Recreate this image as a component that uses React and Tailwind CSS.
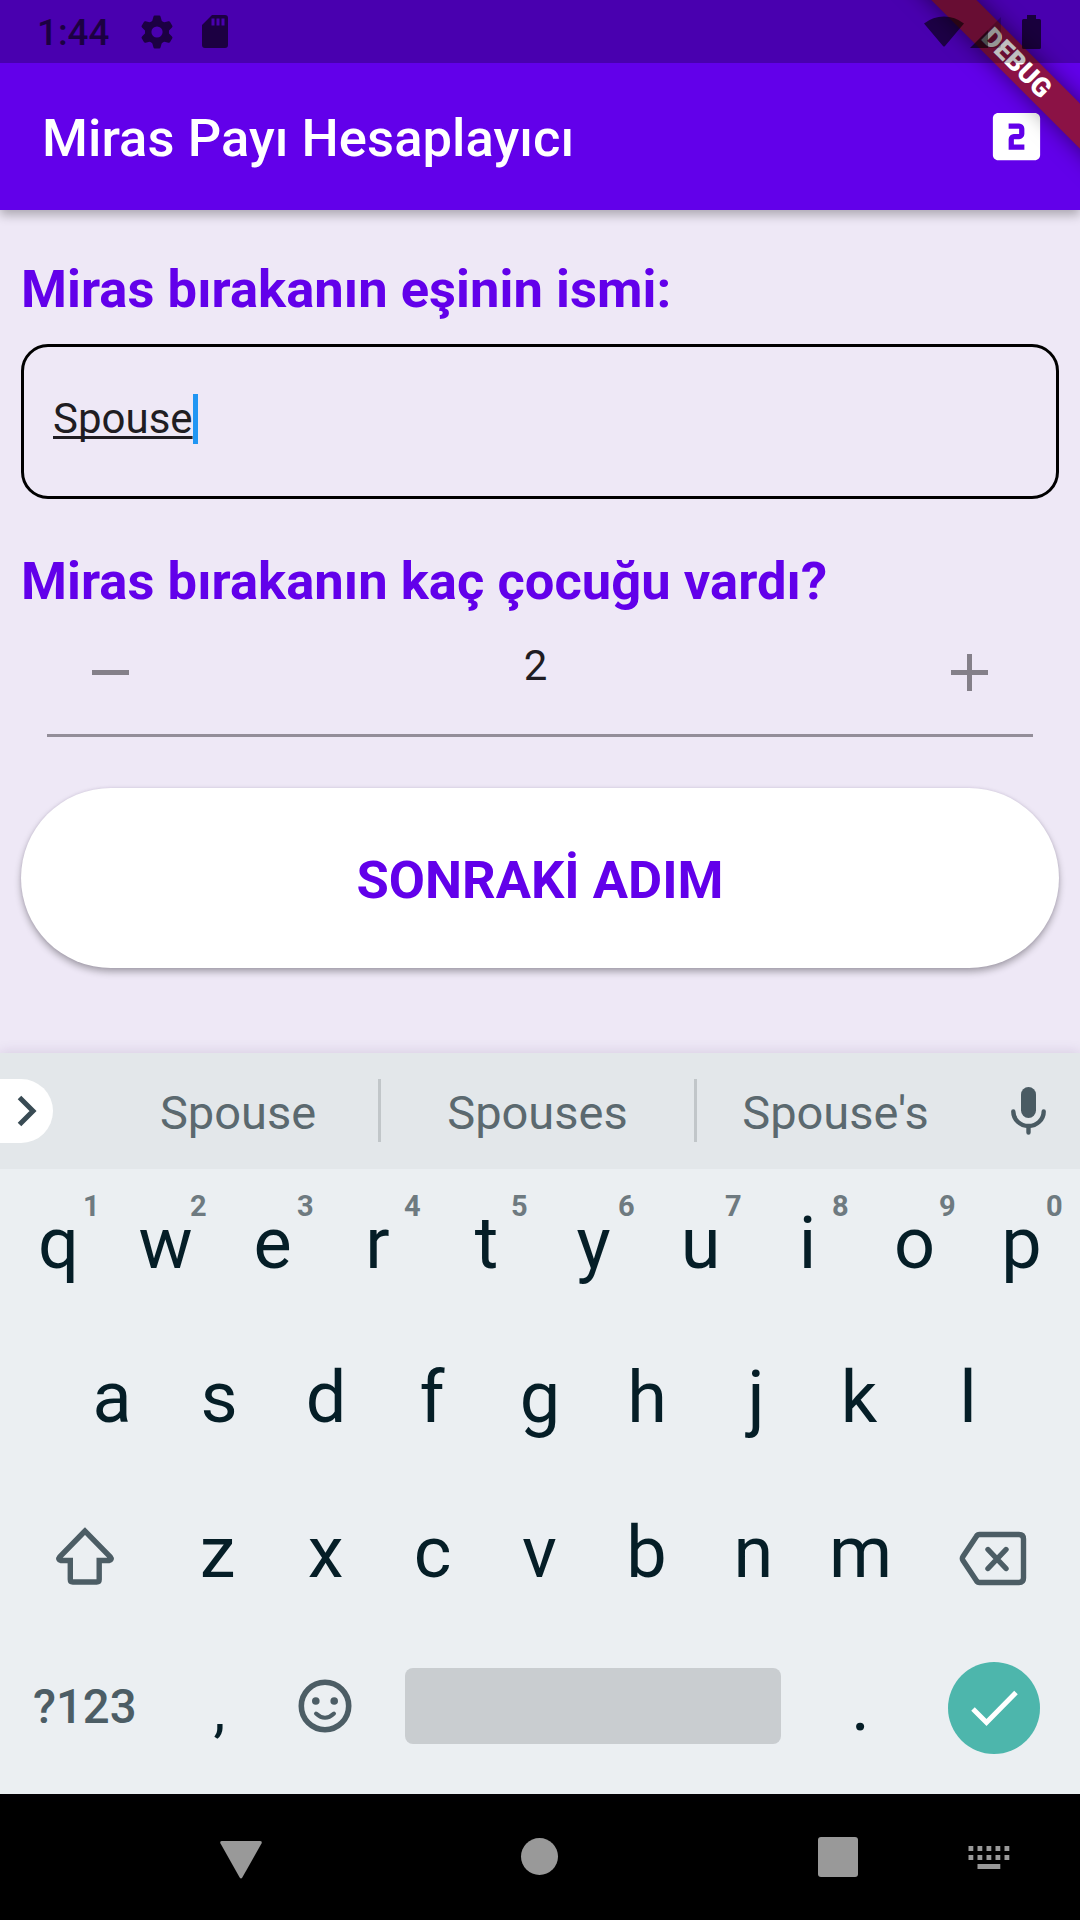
import React from "react";
import { MdLooksTwo } from "react-icons/md";

const topRow = [
  ["q", "1"], ["w", "2"], ["e", "3"], ["r", "4"], ["t", "5"],
  ["y", "6"], ["u", "7"], ["i", "8"], ["o", "9"], ["p", "0"],
];
const homeRow = ["a", "s", "d", "f", "g", "h", "j", "k", "l"];
const bottomRow = ["z", "x", "c", "v", "b", "n", "m"];

// Optical centring of glyphs with uneven side bearings
const glyphNudge = {
  r: "-translate-x-[2px]",
  f: "-translate-x-[1px]",
  j: "translate-x-[2px]",
  k: "-translate-x-[2px]",
  z: "-translate-x-[1px]",
};

function StatusBar() {
  return (
    <div className="relative z-20 flex h-[63px] items-center bg-black/25 pl-[37px] text-[#1c0042]">
      <span className="mt-[2px] w-[103px] text-[36.750px] leading-[44px] font-medium">1:44</span>
      <svg className="h-[34px] w-[34px]" viewBox="-17 -17 34 34" fill="none">
        <circle r="8.8" stroke="#1c0042" strokeWidth="6.4" />
        {[0, 60, 120, 180, 240, 300].map((a) => (
          <path key={a} d="M-5.2-9.5-3.6-15.2q.3-1.2 1.4-1.2h4.4q1.100 0 1.400 1.200L5.200-9.500z" fill="#1c0042" transform={`rotate(${a})`} />
        ))}
      </svg>
      <svg className="ml-[28px] h-[33px] w-[26px]" viewBox="0 0 26 33">
        <path fill="#1c0042" fillRule="evenodd" d="M10 0H23q3 0 3 3V30q0 3-3 3H3q-3 0-3-3V10zM9.500 3.500v7h3v-7zM14.500 3.500v7h3v-7zM19.500 3.500v7h3v-7z" />
      </svg>
      <div className="ml-auto flex items-center pr-[39px]">
        <svg className="h-[32px] w-[40px]" viewBox="0 0 40 32">
          <path d="M0 7.500Q9 .5 20 .5T40 7.500L21 30q-1 1.200-2 0z" fill="#000" fillOpacity=".6" />
        </svg>
        <svg className="ml-[6px] h-[32px] w-[32px]" viewBox="0 0 32 32">
          <path d="M0 32 18 14V32z" fill="#000" fillOpacity=".6" />
          <path d="M18 14 31 1V30q0 2-2 2H18z" fill="#000" fillOpacity=".22" />
        </svg>
        <svg className="ml-[20px] h-[34px] w-[19px]" viewBox="0 0 19 34">
          <path d="M5 0h9v4h3.500q1.500 0 1.500 1.500v27q0 1.500-1.500 1.500h-16Q0 34 0 32.500v-27Q0 4 1.500 4H5z" fill="#000" fillOpacity=".65" />
        </svg>
      </div>
    </div>
  );
}

function DebugBanner() {
  return (
    <div className="absolute top-0 right-0 z-10 h-[210px] w-[220px] overflow-hidden">
      <div className="absolute top-[47px] left-[7px] flex h-[31.500px] w-[300px] rotate-45 items-center justify-center bg-[#8b1245] text-[26.800px] leading-[32px] font-black text-white shadow-[0_0_22px_rgba(0,0,0,0.5)]">
        DEBUG
      </div>
    </div>
  );
}

function Suggestion({ children }) {
  return <div className="flex h-[63px] items-center justify-center pt-[5px] text-[47px] text-[#5b696f]">{children}</div>;
}

function Key({ label, hint }) {
  return (
    <div className="relative flex w-[107px] justify-center text-[72px] leading-[84px] text-[#051e27]">
      <span className={glyphNudge[label]}>{label}</span>
      {hint && (
        <span className="absolute top-[-13px] left-[78px] w-[16px] text-center text-[29px] leading-[34px] font-bold text-[#6e7a80]">{hint}</span>
      )}
    </div>
  );
}

function Keyboard() {
  return (
    <section className="relative h-[741px] bg-[#ebeff2] shadow-[0_-1px_12px_rgba(60,20,90,0.13)]">
      <div className="flex h-[116px] items-center bg-[#e3e7ea]">
        <div className="flex h-[64px] w-[53px] items-center rounded-r-[32px] bg-white pl-[17px]">
          <svg className="h-[32px] w-[20px]" viewBox="0 0 20 32">
            <path d="M2.500 2.500 16 16 2.500 29.500" fill="none" stroke="#394b54" strokeWidth="5" />
          </svg>
        </div>
        <div className="ml-[45px] w-[280px]"><Suggestion>Spouse</Suggestion></div>
        <div className="mb-px h-[63px] w-[3px] bg-[#c1c6c9]" />
        <div className="w-[313px]"><Suggestion>Spouses</Suggestion></div>
        <div className="mb-px h-[63px] w-[3px] bg-[#c1c6c9]" />
        <div className="w-[277px]"><Suggestion>Spouse's</Suggestion></div>
        <svg className="ml-[37px] h-[48px] w-[35px]" viewBox="0 0 35 48">
          <rect x="10" y="0" width="15" height="31" rx="7.500" fill="#4a5b63" />
          <path d="M2.300 24.500a15.200 14.500 0 0 0 30.400 0M17.500 39v6.500" fill="none" stroke="#4a5b63" strokeWidth="4.400" strokeLinecap="round" />
        </svg>
      </div>

      <div className="flex h-[154px] justify-center pt-[33px]">
        {topRow.map(([k, n]) => <Key key={k} label={k} hint={n} />)}
      </div>
      <div className="flex h-[155px] justify-center pt-[33px]">
        {homeRow.map((k) => <Key key={k} label={k} />)}
      </div>
      <div className="flex h-[154px] items-start pt-[33px]">
        <div className="flex w-[165px] pt-[16px] pl-[55px]">
          <svg className="h-[60px] w-[60px]" viewBox="0 0 60 60" fill="none" stroke="#4c5d65" strokeWidth="5.400">
            <path d="M30 4 4.800 29.800q-2.500 3 1.200 3.700H15.300V52.500q0 2.500 2.500 2.500H41.700q2.500 0 2.500-2.500V33.500H54q3.700-.7 1.200-3.700z" />
          </svg>
        </div>
        {bottomRow.map((k) => <Key key={k} label={k} />)}
        <svg className="mt-[20px] ml-[45px] h-[55px] w-[68px]" viewBox="0 0 68 55" fill="none" stroke="#4c5d65" strokeWidth="5.400">
          <path d="M20.500 3.500H60q4.500 0 4.500 4.500V47q0 4.500-4.500 4.500H20.500q-2 0-3.200-2L4 29.500q-1.300-2 0-4L17.300 5.500q1.200-2 3.200-2z" />
          <path d="M29 18.500 47 37.500M47 18.500 29 37.500" strokeLinecap="round" />
        </svg>
      </div>
      <div className="flex h-[162px] items-start">
        <div className="mt-[47px] w-[165px] pl-[33px] text-[47.250px] leading-[56px] font-medium text-[#4c5d65]">?123</div>
        <div className="mt-[43px] w-[107px] pl-[2px] text-center text-[60px] leading-[70px] text-[#051e27]">,</div>
        <div className="flex w-[107px] justify-center pt-[47px] pr-[1px]">
          <svg className="h-[54px] w-[54px]" viewBox="0 0 54 54" fill="none" stroke="#4c5d65">
            <circle cx="27" cy="27" r="23.700" strokeWidth="5.600" />
            <path d="M18 34.500q9 8.500 18 0" strokeWidth="4" strokeLinecap="round" />
            <circle cx="17.800" cy="22" r="3.800" fill="#4c5d65" stroke="none" />
            <circle cx="36.200" cy="22" r="3.800" fill="#4c5d65" stroke="none" />
          </svg>
        </div>
        <div className="mt-[36px] ml-[26px] h-[76px] w-[376px] rounded-[8px] bg-[#c9cdd0]" />
        <div className="mt-[32px] ml-[25px] w-[107px] pl-[2px] text-center text-[72px] leading-[84px] text-[#051e27]">.</div>
        <div className="mt-[30px] ml-[35px] flex h-[92px] w-[92px] items-center justify-center rounded-full bg-[#4db6ac]">
          <svg className="h-[37px] w-[47px]" viewBox="0 0 47 37">
            <path d="M2 19 15.500 32.500 45 2.500" fill="none" stroke="#fff" strokeWidth="5" />
          </svg>
        </div>
      </div>
    </section>
  );
}

function NavigationBar() {
  return (
    <nav className="flex h-[126px] bg-black pl-[220px]">
      <svg className="mt-[47px] h-[38px] w-[42px]" viewBox="0 0 42 38">
        <path d="M2 0H40q2.500 0 1.500 2.500L22.300 36.500q-1.300 2-2.600 0L.5 2.500Q-.5 0 2 0z" fill="#999" />
      </svg>
      <div className="mt-[44px] ml-[259px] h-[37px] w-[37px] rounded-full bg-[#999]" />
      <div className="mt-[43px] ml-[260px] h-[40px] w-[40px] rounded-[3px] bg-[#999]" />
      <svg className="mt-[52px] ml-[110px] h-[24px] w-[42px]" viewBox="0 0 42 24" fill="#999">
        {[0, 1, 2, 3, 4].map((i) => (
          <g key={i}>
            <rect x={0.5 + i * 9} y="0" width="4.800" height="5" />
            <rect x={0.5 + i * 9} y="9" width="4.800" height="5" />
          </g>
        ))}
        <rect x="9.500" y="18" width="22.800" height="5" />
      </svg>
    </nav>
  );
}

export default function App() {
  return (
    <div className="relative flex h-[1920px] w-[1080px] flex-col overflow-hidden bg-[#eee8f6] font-['Roboto',sans-serif]">
      <header className="relative z-10 h-[210px] bg-[#6200ea] shadow-[0_5px_10px_rgba(0,0,0,0.28)]">
        <DebugBanner />
        <StatusBar />
        <div className="flex h-[147px] items-center justify-between pr-[32px] pl-[42px]">
          <h1 className="pt-[3px] text-[52.500px] leading-[62px] font-medium tracking-[0.06px] text-white">Miras Payı Hesaplayıcı</h1>
          <MdLooksTwo className="h-[63px] w-[63px] text-white" />
        </div>
      </header>

      <main className="flex h-[843px] flex-col px-[21px] pt-[48px] text-[#1f1d22]">
        <h2 className="h-[62px] text-[52.500px] leading-[62px] font-bold tracking-[0.04px] text-[#6200ea]">Miras bırakanın eşinin ismi:</h2>
        <div className="mt-[24px] flex h-[155px] items-center rounded-[27px] border-[3px] border-black pb-[5px] pl-[29px]">
          <span className="text-[42px] leading-[50px] underline decoration-[2.500px] underline-offset-[3px] [text-decoration-skip-ink:none]">Spouse</span>
          <span className="h-[50px] w-[5px] bg-[#2196f3]" />
        </div>
        <h2 className="mt-[51px] h-[62px] text-[52.500px] leading-[62px] font-bold tracking-[0.04px] text-[#6200ea]">Miras bırakanın kaç çocuğu vardı?</h2>
        <div className="mx-[26px] flex h-[125px] items-start justify-between border-b-[3px] border-[#938e99] px-[45px]">
          <svg className="mt-[42px] h-[37px] w-[37px]" viewBox="0 0 37 37"><path d="M0 18.500h37" stroke="#848089" strokeWidth="5" /></svg>
          <span className="mt-[29px] mr-[9px] text-[42px] leading-[50px]">2</span>
          <svg className="mt-[42px] h-[37px] w-[37px]" viewBox="0 0 37 37"><path d="M0 18.500h37M18.500 0v37" stroke="#848089" strokeWidth="5" /></svg>
        </div>
        <button className="mt-[51px] h-[180px] shrink-0 rounded-full bg-white pt-[4px] text-[52.500px] font-bold text-[#6200ea] shadow-[0_4px_7px_rgba(0,0,0,0.3),0_0_3px_rgba(80,40,120,0.12)]">
          SONRAKİ ADIM
        </button>
      </main>

      <Keyboard />
      <NavigationBar />
    </div>
  );
}
